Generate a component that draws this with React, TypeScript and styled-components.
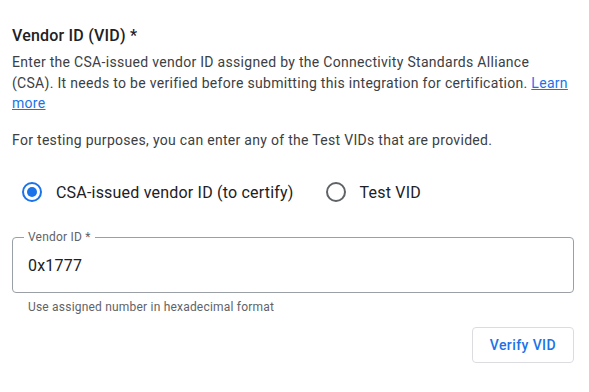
import React, { useState } from 'react';
import styled, { createGlobalStyle } from 'styled-components';

const GlobalStyle = createGlobalStyle`
  body {
    margin: 0;
    background: #ffffff;
    font-family: Roboto, "Noto Sans", Arial, sans-serif;
    color: #202124;
  }
`;

const Page = styled.div`
  width: 589px;
  box-sizing: border-box;
  padding: 26px 15px 0 12px;
`;

const Title = styled.h2`
  margin: 0;
  font-size: 16px;
  font-weight: 500;
  line-height: 20px;
  letter-spacing: 0.2px;
`;

const Text = styled.p`
  margin: 0;
  font-size: 14px;
  line-height: 20.5px;
  letter-spacing: 0.3px;
  color: #3c4043;

  & + & {
    margin-top: 16px;
  }
`;

const Description = styled.div`
  margin-top: 6px;
`;

const Link = styled.a`
  color: #1a73e8;
  text-decoration: underline;
`;

const RadioGroup = styled.div`
  display: flex;
  align-items: center;
  gap: 22px;
  margin-top: 22px;
`;

const RadioLabel = styled.label`
  display: flex;
  align-items: center;
  gap: 4px;
  font-size: 16px;
  letter-spacing: 0.2px;
  color: #202124;
  cursor: pointer;
`;

const RadioHit = styled.span`
  width: 40px;
  height: 40px;
  display: flex;
  align-items: center;
  justify-content: center;
`;

const RadioCircle = styled.span<{ $checked: boolean }>`
  width: 20px;
  height: 20px;
  box-sizing: border-box;
  border-radius: 50%;
  border: 2px solid ${p => (p.$checked ? '#1a73e8' : '#5f6368')};
  display: flex;
  align-items: center;
  justify-content: center;

  &::after {
    content: '';
    width: 10px;
    height: 10px;
    border-radius: 50%;
    background: ${p => (p.$checked ? '#1a73e8' : 'transparent')};
  }
`;

const HiddenInput = styled.input`
  display: none;
`;

const Field = styled.fieldset`
  margin: 18px 0 0;
  padding: 0 15px 0 15px;
  height: 63px;
  box-sizing: border-box;
  border: 1px solid #9aa0a6;
  border-radius: 4px;
  display: flex;
  flex-direction: column;
`;

const Legend = styled.legend`
  padding: 0 4px;
  margin-left: -4px;
  font-size: 12px;
  line-height: 14px;
  letter-spacing: 0.2px;
  color: #5f6368;
`;

const Input = styled.input`
  border: none;
  outline: none;
  padding: 0;
  margin-top: 12px;
  font-family: inherit;
  font-size: 16px;
  letter-spacing: 0.2px;
  color: #202124;
  background: transparent;
`;

const Helper = styled.div`
  margin: 6px 0 0 16px;
  font-size: 12px;
  line-height: 16px;
  color: #5f6368;
  letter-spacing: 0.2px;
`;

const Actions = styled.div`
  display: flex;
  justify-content: flex-end;
  margin-top: 12px;
`;

const Button = styled.button`
  height: 36px;
  padding: 0 17px;
  background: #ffffff;
  border: 1px solid #dadce0;
  border-radius: 4px;
  color: #1a73e8;
  font-family: inherit;
  font-size: 14px;
  font-weight: 500;
  letter-spacing: 0.4px;
  cursor: pointer;
`;

const options = [
  { id: 'csa', label: 'CSA-issued vendor ID (to certify)' },
  { id: 'test', label: 'Test VID' },
];

export default function App() {
  const [choice, setChoice] = useState('csa');
  const [vid, setVid] = useState('0x1777');

  return (
    <>
      <GlobalStyle />
      <Page>
        <Title>Vendor ID (VID) *</Title>
        <Description>
          <Text>
            Enter the CSA-issued vendor ID assigned by the Connectivity Standards Alliance
            (CSA). It needs to be verified before submitting this integration for certification.{' '}
            <Link href="#">Learn more</Link>
          </Text>
          <Text>For testing purposes, you can enter any of the Test VIDs that are provided.</Text>
        </Description>

        <RadioGroup>
          {options.map(o => (
            <RadioLabel key={o.id}>
              <HiddenInput
                type="radio"
                name="vid-type"
                checked={choice === o.id}
                onChange={() => setChoice(o.id)}
              />
              <RadioHit>
                <RadioCircle $checked={choice === o.id} />
              </RadioHit>
              {o.label}
            </RadioLabel>
          ))}
        </RadioGroup>

        <Field>
          <Legend>Vendor ID *</Legend>
          <Input value={vid} onChange={e => setVid(e.target.value)} />
        </Field>
        <Helper>Use assigned number in hexadecimal format</Helper>

        <Actions>
          <Button type="button">Verify VID</Button>
        </Actions>
      </Page>
    </>
  );
}
